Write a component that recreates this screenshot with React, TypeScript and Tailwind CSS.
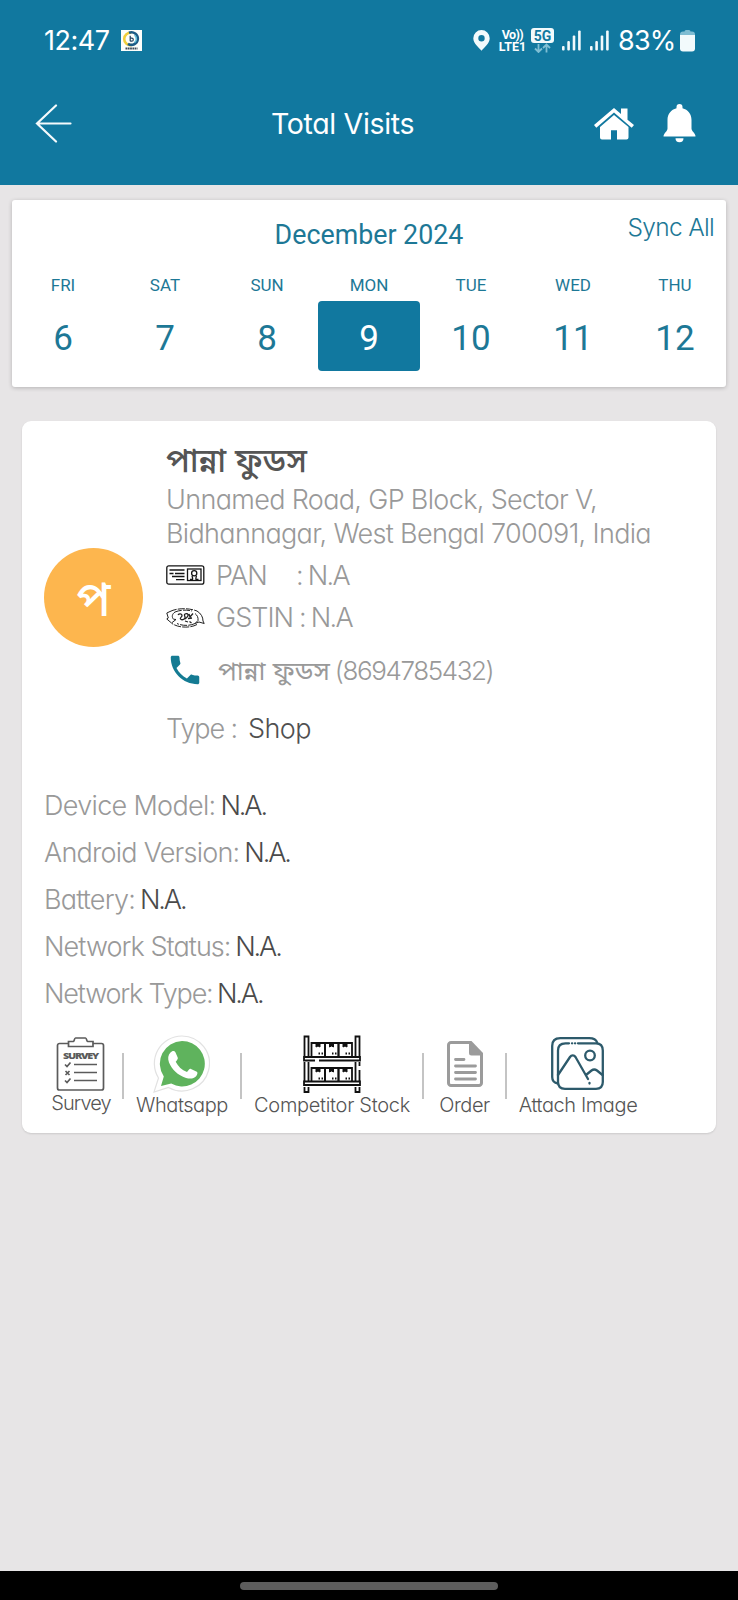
import type { ReactNode } from "react";
import { MdPhone } from "react-icons/md";

const days = [
  { name: "FRI", date: 6 },
  { name: "SAT", date: 7 },
  { name: "SUN", date: 8 },
  { name: "MON", date: 9 },
  { name: "TUE", date: 10 },
  { name: "WED", date: 11 },
  { name: "THU", date: 12 },
];
const selectedDate = 9;

const deviceInfo = [
  { label: "Device Model:", track: "tracking-[-0.68px]" },
  { label: "Android Version:", track: "tracking-[-0.76px]" },
  { label: "Battery:", track: "tracking-[-0.8px]" },
  { label: "Network Status:", track: "tracking-[-0.95px]" },
  { label: "Network Type:", track: "tracking-[-1.2px]" },
];

function SignalBars() {
  return (
    <svg width="19" height="21" viewBox="0 0 19 21" fill="#f2fafc">
      <rect x="0" y="16" width="2.6" height="4.5" rx="1" />
      <rect x="5.3" y="11" width="2.6" height="9.5" rx="1" />
      <rect x="10.7" y="5.5" width="2.6" height="15" rx="1" />
      <rect x="16.1" y="0.5" width="2.6" height="20" rx="1" />
    </svg>
  );
}

function StatusBar() {
  return (
    <div className="flex h-[81px] items-center pl-[44px] pr-[43px] text-[27px] text-white">
      <span className="w-[77px] pt-px tracking-[-0.5px]">12:47</span>
      <svg width="21" height="21" viewBox="0 0 21 21">
        <rect width="21" height="21" fill="#fdfefb" />
        <path d="M10.5 2.8a6.2 6.2 0 1 0 0 12.2" fill="none" stroke="#f1cf3c" strokeWidth="2.6" />
        <path d="M8 2.8a6.3 6.3 0 1 1-1 11" fill="none" stroke="#1c5b85" strokeWidth="2.6" />
        <path d="M13.5 5.2a4.6 4.6 0 0 1 0 7.4" fill="none" stroke="#63bfd8" strokeWidth="1.6" />
        <path d="M9.2 5.8v5.4M9.2 8.2h1.6a1.5 1.5 0 0 1 0 3H9.2" fill="none" stroke="#23415e" strokeWidth="1.2" />
        <path d="M4.5 18.4h12" stroke="#3d4a57" strokeWidth="2" strokeDasharray="1.8 .5" />
      </svg>
      <div className="ml-auto flex items-center">
        <svg width="17" height="21" viewBox="0 0 17 21" fill="#f2fafc" fillRule="evenodd">
          <path d="M8.5 0A8.2 8.2 0 0 0 .3 8.2C.3 13.5 6 17.500 8.500 20.700 11 17.500 16.700 13.500 16.700 8.200A8.200 8.200 0 0 0 8.500 0ZM8.500 5.100a3.200 3.200 0 1 1 0 6.400 3.200 3.200 0 0 1 0-6.400Z" />
        </svg>
        <div className="ml-[9px] flex w-[27px] flex-col items-center font-[Roboto] text-[12.5px] font-bold leading-[12px]">
          <span className="tracking-[-0.6px]">Vo))</span>
          <span>LTE1</span>
        </div>
        <div className="ml-[5px] flex w-[23px] flex-col items-center">
          <div className="flex h-[15px] w-[23px] items-center justify-center rounded-[3px] bg-[#f2fafc] font-[Roboto] text-[14px] font-bold leading-none text-[#11789f]">
            5G
          </div>
          <svg width="17" height="10" viewBox="0 0 17 10" fill="none" stroke="#7fbfd4" strokeWidth="1.8">
            <path d="M4.500 1v8M1 5.500l3.500 3.500L8 5.500M12.500 9.500v-8M9 5l3.500-3.500L16 5" />
          </svg>
        </div>
        <div className="ml-[8px] flex gap-[9px]">
          <SignalBars />
          <SignalBars />
        </div>
        <span className="ml-[9px] w-[58px] whitespace-nowrap pt-px tracking-[-0.8px]">83%</span>
        <svg className="ml-[4px]" width="15" height="22" viewBox="0 0 15 22">
          <path d="M4.500 1.500A1.500 1.500 0 0 1 6 0h3a1.500 1.500 0 0 1 1.500 1.500H12a3 3 0 0 1 3 3V7H0V4.500a3 3 0 0 1 3-3Z" fill="#7fbdd3" />
          <path d="M0 5h15v13.500a3 3 0 0 1-3 3H3a3 3 0 0 1-3-3Z" fill="#f2fafc" />
        </svg>
      </div>
    </div>
  );
}

function TitleBar() {
  return (
    <div className="flex h-[85px] items-center pl-[35px] pr-[42px] text-white">
      <svg width="37" height="39" viewBox="0 0 37 39" fill="none" stroke="#f4fafc" strokeWidth="2.200" strokeLinecap="round">
        <path d="M35.500 19.500H2M21 1.500 2 19.500 21 37.500" />
      </svg>
      <span className="ml-[199px] whitespace-nowrap pt-[2px] text-[28.5px] tracking-[-0.35px]">Total Visits</span>
      <div className="ml-auto flex items-center gap-[29px]">
        <svg width="40" height="32" viewBox="0 0 40 32" fill="#fff">
          <path d="M20 0 27 6V.5h6.500v11.200L40 17l-2.300 2.800L20 4.600 2.300 19.800 0 17Z" />
          <path d="M20 7 34.500 19v10.500a2 2 0 0 1-2 2H23v-9.200h-6v9.200H8a2 2 0 0 1-2-2V19Z" />
        </svg>
        <svg width="33" height="39" viewBox="0 0 33 39" fill="#fff">
          <path d="M13.500 3a3 3 0 0 1 6 0v1.300C25 5.800 28.500 10 28.500 16v8.500c0 3 4 4.500 4 8H.5c0-3.500 4-5 4-8V16C4.500 10 8 5.800 13.500 4.300Z" />
          <path d="M12.500 34.300h8a4 4 0 0 1-8 0Z" />
        </svg>
      </div>
    </div>
  );
}

function WeekCard() {
  return (
    <section className="mx-3 mt-[15px] h-[187px] rounded-[3px] bg-white font-[Roboto] text-[#1d7896] shadow-[0_1px_4px_rgba(0,0,0,0.22)]">
      <div className="grid h-[70px] grid-cols-[1fr_auto_1fr]">
        <span />
        <span className="text-[26.8px] leading-[71px]">December 2024</span>
        <span className="mr-[12px] justify-self-end whitespace-nowrap font-[Inter] text-[24.5px] font-[350] leading-[54px] tracking-[-0.7px] [font-feature-settings:'cv11']">
          Sync All
        </span>
      </div>
      <div className="grid grid-cols-7">
        {days.map((d) => (
          <div key={d.name} className="text-center">
            <div className="h-[31px] text-[17px] leading-[31px]">{d.name}</div>
            <div
              className={
                d.date === selectedDate
                  ? "h-[70px] rounded-[4px] bg-[#11789f] pt-[3px] text-[35px] leading-[69px] text-white"
                  : "h-[70px] pt-[3px] text-[35px] leading-[69px]"
              }
            >
              {d.date}
            </div>
          </div>
        ))}
      </div>
    </section>
  );
}

function PanIcon() {
  return (
    <svg width="39" height="20" viewBox="0 0 39 20" fill="none" stroke="#151515" strokeWidth="1.300">
      <rect x=".8" y=".8" width="37" height="18.400" rx="2" />
      <path d="M3.500 5h15M3.500 8.500h4M9 8.500h9.500M6 11.500h12.500M10 14.700h8.500" />
      <rect x="21.500" y="4" width="13.500" height="11.500" />
      <circle cx="28.200" cy="8.300" r="2.600" />
      <path d="M24 14.500h2.500c.5-1.500-.2-2.500-.5-3.500M32.500 14.500H30c-.5-1.500.2-2.500.5-3.500" />
    </svg>
  );
}

function GstIcon() {
  return (
    <svg width="39" height="20" viewBox="0 0 39 20" fill="none" stroke="#222" strokeWidth="1">
      <path d="M4 3.500C10 .3 22-.5 31 3M9 4c5-2 11-2.500 17-1M31 16.500C25 20 13 20.300 6 15.500M29 15.500c-5 2.500-13 2.500-18 0" strokeDasharray="7 1.200" />
      <path d="M4 3.500.8 5l1.500 5L.8 11 5.500 15l4.500-3.500-2.500-.3C5.500 9 6 6 9 4M31 3c4 2.500 6 6 6 10l1.200 2.500-5.200-1.500-4 1.500 3-3c.3-3-.5-5-3-7" />
      <path d="M12 7c1-1.500 4-1.500 4 .5S13.500 9.500 14.500 11s4 .5 4.500-1-1-2.500-.5-3.500 3-1.500 3.500 0-1 3-3 4.500M23 6l1 3 3-3.500M22 10.500l4-.5M19 13l3 1M23.500 13.500l2 1.500" strokeWidth="1.300" />
    </svg>
  );
}

function ShopDetails() {
  return (
    <div className="flex items-center">
      <div className="mb-px flex size-[99px] shrink-0 items-center justify-center rounded-full bg-[#fdb64e] pb-px text-[47px] font-medium leading-none text-white">
        প
      </div>
      <div className="ml-[23px] text-[27px] font-light text-[#999]">
        <h2 className="h-[44px] text-[33px] font-medium leading-[43px] text-[#555]">পান্না ফুডস</h2>
        <p className="whitespace-nowrap leading-[34px] tracking-[-0.66px]">
          Unnamed Road, GP Block, Sector V,
          <br />
          Bidhannagar, West Bengal 700091, India
        </p>
        <div className="mt-[2px] flex h-[43px] items-center">
          <PanIcon />
          <span className="ml-[11px] w-[80px] pt-[3px] tracking-[-0.9px]">PAN</span>
          <span className="pt-[3px] tracking-[-1.7px]">: N.A</span>
        </div>
        <div className="flex h-[43px] items-center">
          <GstIcon />
          <span className="ml-[11px] w-[83px] pt-[2px] tracking-[-0.95px]">GSTIN</span>
          <span className="pt-[2px] tracking-[-1.7px]">: N.A</span>
        </div>
        <div className="flex h-[60px] items-center pt-[2px]">
          <MdPhone className="size-[38px] text-[#147b93]" />
          <div className="ml-[14px] flex items-baseline whitespace-nowrap pt-px text-[26px] tracking-[-1.4px]">
            <span className="text-[26.3px] font-normal tracking-normal">পান্না ফুডস</span>
            <span className="ml-[5px]">(8694785432)</span>
          </div>
        </div>
        <div className="flex h-[58px] items-center pt-[2px]">
          <span className="w-[82px] tracking-[-1.1px]">Type :</span>
          <span className="font-[350] tracking-[-0.6px] text-[#505050]">Shop</span>
        </div>
      </div>
    </div>
  );
}

function SurveyIcon() {
  return (
    <svg className="-translate-x-px" width="49" height="54" viewBox="0 0 48 54" fill="none" stroke="#5b5b5b" strokeWidth="1.700">
      <path d="M12 6.500H3a2 2 0 0 0-2 2V51a2 2 0 0 0 2 2h42a2 2 0 0 0 2-2V8.500a2 2 0 0 0-2-2h-8.500" />
      <path d="M12 9.500v-5h5c.8 0 .8-3.500 2-3.500h10c1.200 0 1.200 3.500 2 3.500h5.500v5Z" />
      <text x="24" y="21.500" textAnchor="middle" textLength="35" lengthAdjust="spacingAndGlyphs" fontFamily="Open Sans" fontWeight="800" fontSize="7.800" fill="#5b5b5b" stroke="none">
        SURVEY
      </text>
      <path d="M17.500 27.500h23M17.500 35.500h23M17.500 43.500h23M8.500 27.500l2 2 3.500-4M9 34l4 4M13 34l-4 4M8.500 43.500l2 2 3.500-4" />
    </svg>
  );
}

function WhatsappIcon() {
  return (
    <svg className="-translate-x-px" width="57" height="58" viewBox="0 0 57 58">
      <path d="M29 1a27.500 27.500 0 1 1-13.500 51.500L1 57l4.500-14A27.500 27.500 0 0 1 29 1Z" fill="#fff" stroke="#e2e2e2" strokeWidth="1.200" />
      <path d="M29 6a22.700 22.700 0 1 1-10.800 42.600L8 51l2.800-9.500A22.700 22.700 0 0 1 29 6Z" fill="#5fb35d" />
      <path
        d="M17.500 17.500c1.500-1.800 3.800-2.300 4.900-.2l2.300 5.200c.5 1.300-.3 2.200-2 4.200 2.500 4.800 6 8.300 11.300 10.300 1.800-2.200 2.500-3.700 4-3.100l5.800 2.900c1.300.8.500 3.200-.7 4.500-2.400 2.500-6 2.900-10 1.600C24.500 40.200 19 34.500 16 27.500c-1.500-4-1-7.500 1.500-10Z"
        fill="#fff"
      />
    </svg>
  );
}

function RackIcon() {
  const shelves = [8, 33];
  const boxes = [8.5, 22, 35.5];
  return (
    <svg width="58" height="58" viewBox="0 0 58 58" fill="none" stroke="#111" strokeWidth="1.800">
      <path d="M1.500 21V1.500h4V21M1.500 27v19M5.500 27v19M1.500 52v5h4v-5M52.500 21V1.500h4V21M52.500 27v19M56.500 27v4M56.500 35v11M52.500 52v5h4v-5" />
      <path d="M12 25.500H1V22h56v3.500H16M1 46.500h56V50H1Z" />
      {shelves.map((y) =>
        boxes.map((x) => (
          <g key={`${x}-${y}`} transform={`translate(${x} ${y})`}>
            <path d="M0 13.500V0h13.500v13.500M7 10.500h1.500M10 10.500h1.500" />
            <path d="M4.500 0v4l2-1 2 1V0Z" fill="#111" strokeWidth="1" />
          </g>
        )),
      )}
    </svg>
  );
}

function OrderIcon() {
  return (
    <svg width="36" height="46" viewBox="0 0 36 46" fill="none" stroke="#9b9b9b">
      <path d="M23 1.500H4A2.500 2.500 0 0 0 1.500 4v38A2.500 2.500 0 0 0 4 44.500h28a2.500 2.500 0 0 0 2.500-2.500V13" strokeWidth="3" />
      <path d="M22 0h2.500L36 12v2.500H24.500A2.500 2.500 0 0 1 22 12Z" fill="#9b9b9b" stroke="none" />
      <path d="M8.500 18.500h8.500M8.500 25h20M8.500 31.500h20M8.500 38h20" strokeWidth="2.800" strokeLinecap="round" />
    </svg>
  );
}

function ImageIcon() {
  return (
    <svg className="-translate-x-px" width="53" height="53" viewBox="0 0 53 53" fill="none" stroke="#2d5a6b" strokeWidth="2.300" strokeLinecap="round">
      <path d="M7 46.500C3.500 46 1.200 44 1.200 40V9c0-5 3-7.800 8-7.800h29c4 0 7 1.500 8 4.500" />
      <path d="M18 6.300h-3.500C9.500 6.300 7 9 7 13.500V45c0 4.500 2.500 6.800 7 6.800h31c4.500 0 6.800-2.300 6.800-6.800V13.500c0-4.500-2.300-7.200-6.800-7.200H27M21 6.300h.2M24 6.300h.2" />
      <path d="M7 38 19 20c1.500-2.300 4-2.300 5.500 0L37 42M38.500 46v.5M35 38l5.500-4.500c2-1.500 3.500-1.500 5.500 0l5.500 4.500" />
      <circle cx="39" cy="18.500" r="4.800" />
    </svg>
  );
}

function Action({ icon, label, className }: { icon: ReactNode; label: string; className: string }) {
  return (
    <div className={`flex flex-col items-center whitespace-nowrap text-[20px] font-[350] ${className}`}>
      <div className="flex h-[58px] items-center pt-px">{icon}</div>
      <span>{label}</span>
    </div>
  );
}

function Divider() {
  return <div className="mt-[19px] h-[46px] w-[2px] bg-[#c4c4c4]" />;
}

function VisitCard() {
  return (
    <section className="mx-[22px] mt-[34px] flex h-[712px] flex-col rounded-[9px] bg-white pt-[18px] shadow-[0_1px_2px_rgba(0,0,0,0.12)]">
      <div className="pl-[22px]">
        <ShopDetails />
        <div className="mt-[25px] flex flex-col text-[27px] font-light leading-[47.1px] text-[#999]">
          {deviceInfo.map((row) => (
            <div key={row.label} className={row.track}>
              {row.label}{" "}
              <span className="-ml-[2px] font-[350] tracking-[-2.1px] text-[#4a4a4a]">N.A.</span>
            </div>
          ))}
        </div>
      </div>
      <div className="mt-[17px] flex pl-[18px] text-[#555]">
        <Action icon={<SurveyIcon />} label="Survey" className="w-[82px] leading-[23px] tracking-[-0.9px]" />
        <Divider />
        <Action icon={<WhatsappIcon />} label="Whatsapp" className="w-[116px] leading-[27px] tracking-[-0.45px]" />
        <Divider />
        <Action icon={<RackIcon />} label="Competitor Stock" className="w-[180px] leading-[27px] tracking-[-0.3px]" />
        <Divider />
        <Action icon={<OrderIcon />} label="Order" className="w-[81px] leading-[27px] tracking-[-0.5px]" />
        <Divider />
        <Action icon={<ImageIcon />} label="Attach Image" className="w-[142px] leading-[27px] tracking-[-0.4px]" />
      </div>
    </section>
  );
}

export default function App() {
  return (
    <div className="flex h-[1600px] w-[738px] flex-col overflow-hidden bg-[#e7e5e6] font-[Inter,'Noto_Sans_Bengali',sans-serif] [font-feature-settings:'cv11']">
      <header className="h-[185px] bg-[#11789f]">
        <StatusBar />
        <TitleBar />
      </header>
      <main className="flex-1">
        <WeekCard />
        <VisitCard />
      </main>
      <footer className="flex h-[29px] items-center justify-center bg-black pt-px">
        <div className="h-2 w-[258px] rounded-full bg-[#5d5d5d]" />
      </footer>
    </div>
  );
}
